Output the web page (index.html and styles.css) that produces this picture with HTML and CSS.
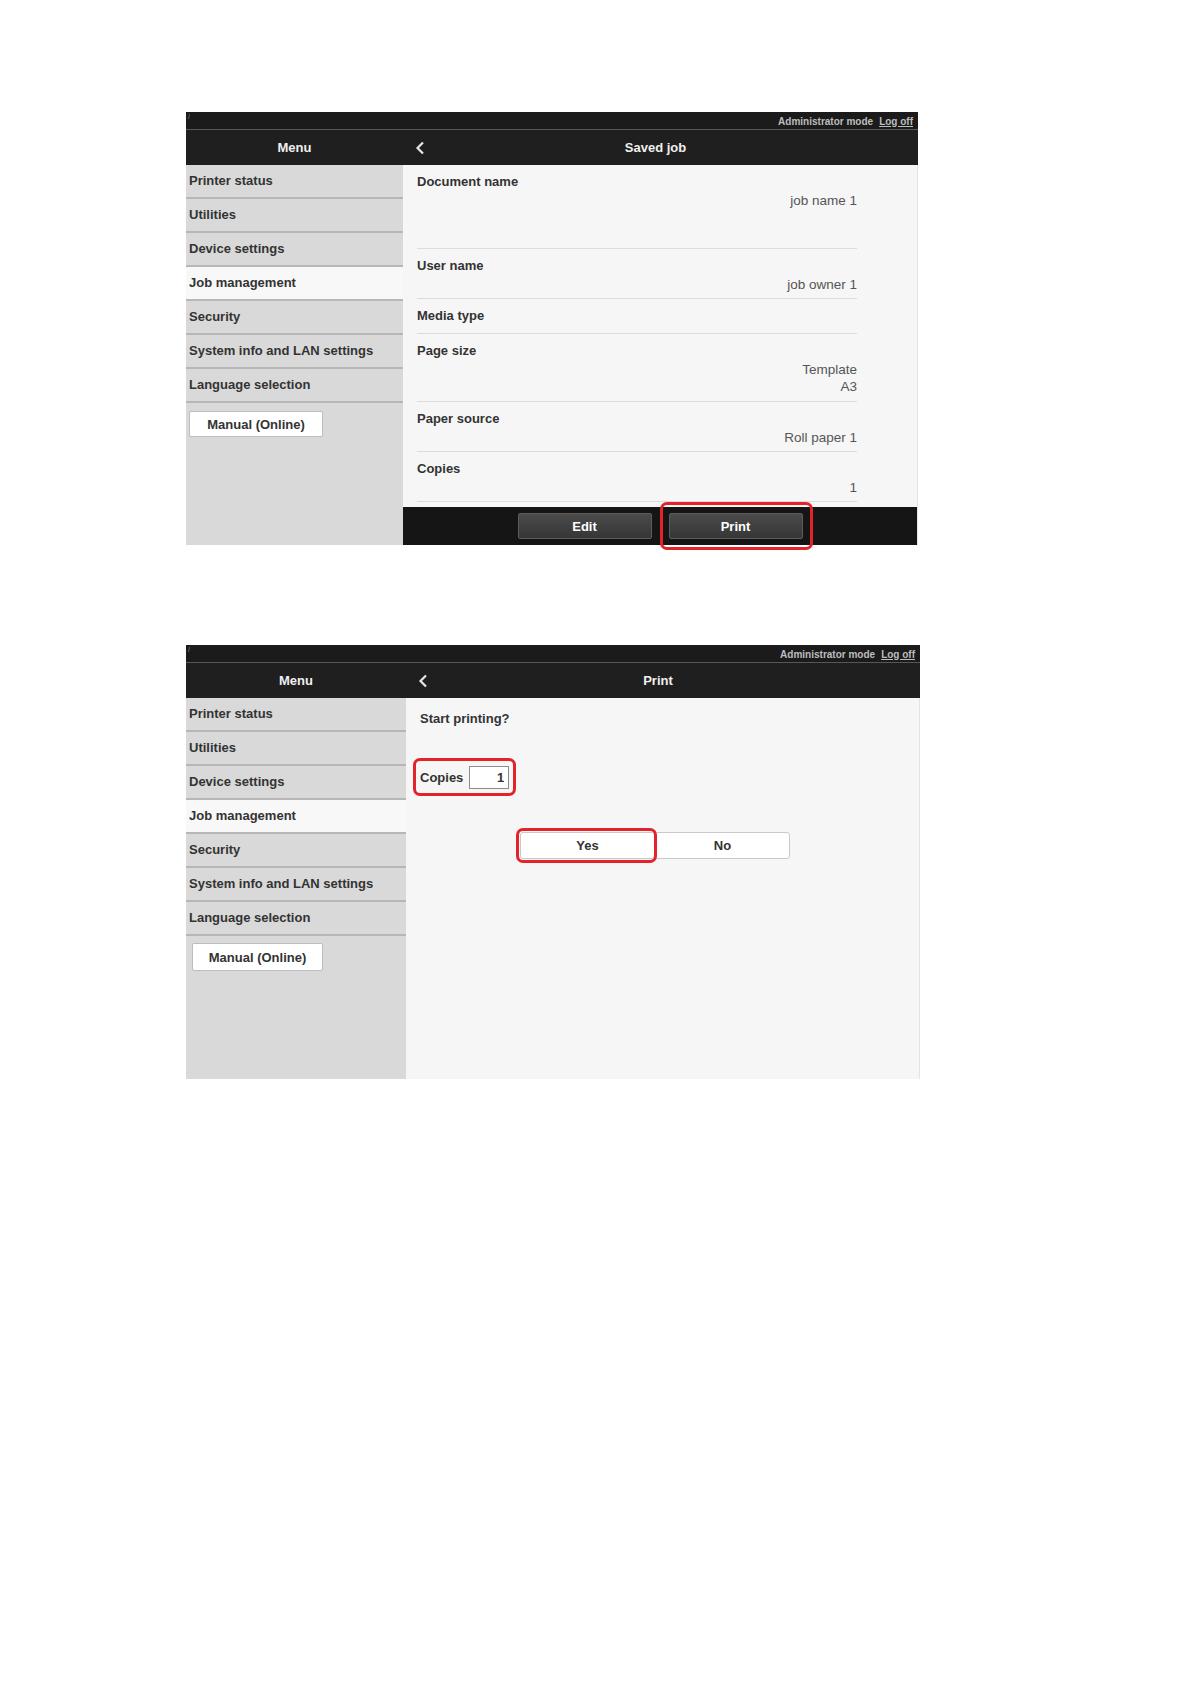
FILE: index.html
```html
<!DOCTYPE html>
<html lang="en">

<head>
    <meta charset="UTF-8">
    <meta name="viewport" content="width=device-width, initial-scale=1.0">
    <title>Saved job - Print</title>
    <link rel="stylesheet" href="styles.css">
</head>

<body>
    <!-- saved job screen -->
    <div class="shot">
        <div class="topbar">
            <span class="mark">/</span>
            <span>Administrator mode</span>
            <a class="logoff">Log off</a>
        </div>
        <div class="titlebar">
            <div class="menu-title">Menu</div>
            <div class="page-title">
                <svg class="back" width="10" height="14" viewBox="0 0 10 14"><polyline points="8,1.5 2.5,7 8,12.5" fill="none" stroke="#e6e6e6" stroke-width="2.2"/></svg>
                <span>Saved job</span>
            </div>
        </div>
        <div class="frame">
            <nav class="menu">
                <div class="menu-item">Printer status</div>
                <div class="menu-item">Utilities</div>
                <div class="menu-item">Device settings</div>
                <div class="menu-item active">Job management</div>
                <div class="menu-item">Security</div>
                <div class="menu-item">System info and LAN settings</div>
                <div class="menu-item">Language selection</div>
                <button class="manual">Manual (Online)</button>
            </nav>
            <main class="content content--job">
                <div class="fields">
                    <div class="field field--doc">
                        <div class="label">Document name</div>
                        <div class="value">job name 1</div>
                    </div>
                    <div class="field">
                        <div class="label">User name</div>
                        <div class="value">job owner 1</div>
                    </div>
                    <div class="field field--bare">
                        <div class="label">Media type</div>
                    </div>
                    <div class="field field--page">
                        <div class="label">Page size</div>
                        <div class="value">Template<br>A3</div>
                    </div>
                    <div class="field">
                        <div class="label">Paper source</div>
                        <div class="value">Roll paper 1</div>
                    </div>
                    <div class="field">
                        <div class="label">Copies</div>
                        <div class="value">1</div>
                    </div>
                </div>
                <div class="actions">
                    <button class="dark-btn">Edit</button>
                    <button class="dark-btn marked mark-print">Print</button>
                </div>
            </main>
        </div>
    </div>

    <!-- print confirmation screen -->
    <div class="shot shot--print">
        <div class="topbar">
            <span class="mark">/</span>
            <span>Administrator mode</span>
            <a class="logoff">Log off</a>
        </div>
        <div class="titlebar">
            <div class="menu-title">Menu</div>
            <div class="page-title">
                <svg class="back" width="10" height="14" viewBox="0 0 10 14"><polyline points="8,1.5 2.5,7 8,12.5" fill="none" stroke="#e6e6e6" stroke-width="2.2"/></svg>
                <span>Print</span>
            </div>
        </div>
        <div class="frame">
            <nav class="menu">
                <div class="menu-item">Printer status</div>
                <div class="menu-item">Utilities</div>
                <div class="menu-item">Device settings</div>
                <div class="menu-item active">Job management</div>
                <div class="menu-item">Security</div>
                <div class="menu-item">System info and LAN settings</div>
                <div class="menu-item">Language selection</div>
                <button class="manual">Manual (Online)</button>
            </nav>
            <main class="content content--print">
                <p class="question">Start printing?</p>
                <div class="copies marked mark-copies">
                    <label for="copies">Copies</label>
                    <input type="text" id="copies" value="1">
                </div>
                <div class="choice">
                    <button class="light-btn marked mark-yes">Yes</button>
                    <button class="light-btn">No</button>
                </div>
            </main>
        </div>
    </div>
</body>

</html>
```

FILE: styles.css
```css
* {
    margin: 0;
    padding: 0;
    box-sizing: border-box;
}

body {
    font-family: "Liberation Sans", Arial, sans-serif;
    color: #333;
    background: #fff;
    padding: 112px 0 0 186px;
    min-height: 1684px;
}

button,
input {
    font-family: inherit;
}

.shot {
    --side: 217px;
    width: 732px;
    margin-bottom: 100px;
}

.shot--print {
    --side: 220px;
    width: 734px;
}

/* top strip */
.topbar {
    height: 18px;
    background: #1b1b1b;
    border-bottom: 1px solid #575757;
    display: flex;
    align-items: center;
    gap: 6px;
    padding: 1px 5px 0 2px;
    font-size: 10px;
    font-weight: bold;
    color: #bdbdbd;
}

.topbar .mark {
    margin-right: auto;
    align-self: flex-start;
    font-size: 7px;
    font-weight: normal;
    color: #8a8a8a;
}

.logoff {
    text-decoration: underline;
}

/* title bar */
.titlebar {
    height: 35px;
    background: #1f1f1f;
    display: grid;
    grid-template-columns: var(--side) 1fr;
    color: #f0f0f0;
    font-size: 13px;
    font-weight: bold;
}

.menu-title {
    display: flex;
    align-items: center;
    justify-content: center;
}

.page-title {
    display: grid;
    grid-template-columns: 30px 1fr 30px;
    align-items: center;
    padding: 0 12px 0 2px;
}

.page-title span {
    text-align: center;
}

.back {
    margin-left: 10px;
    display: block;
}

/* side menu */
.frame {
    display: grid;
    grid-template-columns: var(--side) 1fr;
    height: 380px;
}

.shot--print .frame {
    height: 381px;
}

.menu {
    background: #d9d9d9;
}

.menu-item {
    height: 34px;
    line-height: 32px;
    padding-left: 3px;
    border-bottom: 2px solid #b7b7b7;
    font-size: 13px;
    font-weight: bold;
    color: #333;
}

.menu-item.active {
    background: #f8f8f8;
}

.manual {
    display: block;
    margin: 8px 0 0 3px;
    width: 134px;
    height: 26px;
    background: #fff;
    border: 1px solid #bdbdbd;
    border-radius: 2px;
    font-size: 13px;
    font-weight: bold;
    color: #333;
}

.shot--print .manual {
    margin: 7px 0 0 6px;
    width: 131px;
    height: 28px;
}

/* content */
.content {
    background: #f6f6f6;
    border-right: 1px solid #e4e4e4;
}

.content--job {
    display: flex;
    flex-direction: column;
}

.fields {
    flex: 1;
    margin: 0 60px 0 14px;
}

.field {
    padding: 8px 0 5px;
    border-bottom: 1px solid #dcdcdc;
}

.field--bare {
    padding-bottom: 9px;
}

.field--page {
    padding-bottom: 6px;
}

.label {
    line-height: 17px;
    font-size: 13px;
    font-weight: bold;
    color: #333;
}

.value {
    margin-top: 2px;
    line-height: 17px;
    font-size: 13.5px;
    color: #555;
    text-align: right;
}

.field--doc .value {
    min-height: 51px;
}

.actions {
    height: 38px;
    background: #151515;
    display: flex;
    align-items: center;
    justify-content: center;
    gap: 17px;
}

.dark-btn {
    width: 134px;
    height: 26px;
    background: linear-gradient(#4a4a4a, #363636);
    border: 1px solid #5c5c5c;
    border-radius: 2px;
    color: #fff;
    font-size: 13px;
    font-weight: bold;
}

/* red highlight frames */
.marked {
    position: relative;
}

.marked::after {
    content: "";
    position: absolute;
    border: 3px solid #e2232b;
    border-radius: 7px;
    pointer-events: none;
}

.mark-print::after {
    inset: -12px -11px -12px -10px;
}

.mark-copies::after {
    inset: -8px -7px -7px -7px;
}

.mark-yes::after {
    inset: -5px -3px -5px -5px;
}

/* print confirmation */
.content--print {
    padding: 12px 16px 0 14px;
}

.question {
    line-height: 17px;
    font-size: 13px;
    font-weight: bold;
}

.copies {
    display: inline-flex;
    align-items: center;
    gap: 6px;
    margin-top: 39px;
    font-size: 13px;
    font-weight: bold;
}

.copies input {
    width: 40px;
    height: 23px;
    border: 1px solid #8c8c8c;
    background: #fff;
    text-align: right;
    padding-right: 4px;
    font-size: 13px;
    font-weight: bold;
    color: #333;
}

.choice {
    display: flex;
    margin-top: 43px;
    padding-left: 100px;
}

.light-btn {
    width: 135px;
    height: 27px;
    background: #fff;
    border: 1px solid #c9c9c9;
    border-radius: 3px;
    font-size: 13px;
    font-weight: bold;
    color: #333;
}
```
